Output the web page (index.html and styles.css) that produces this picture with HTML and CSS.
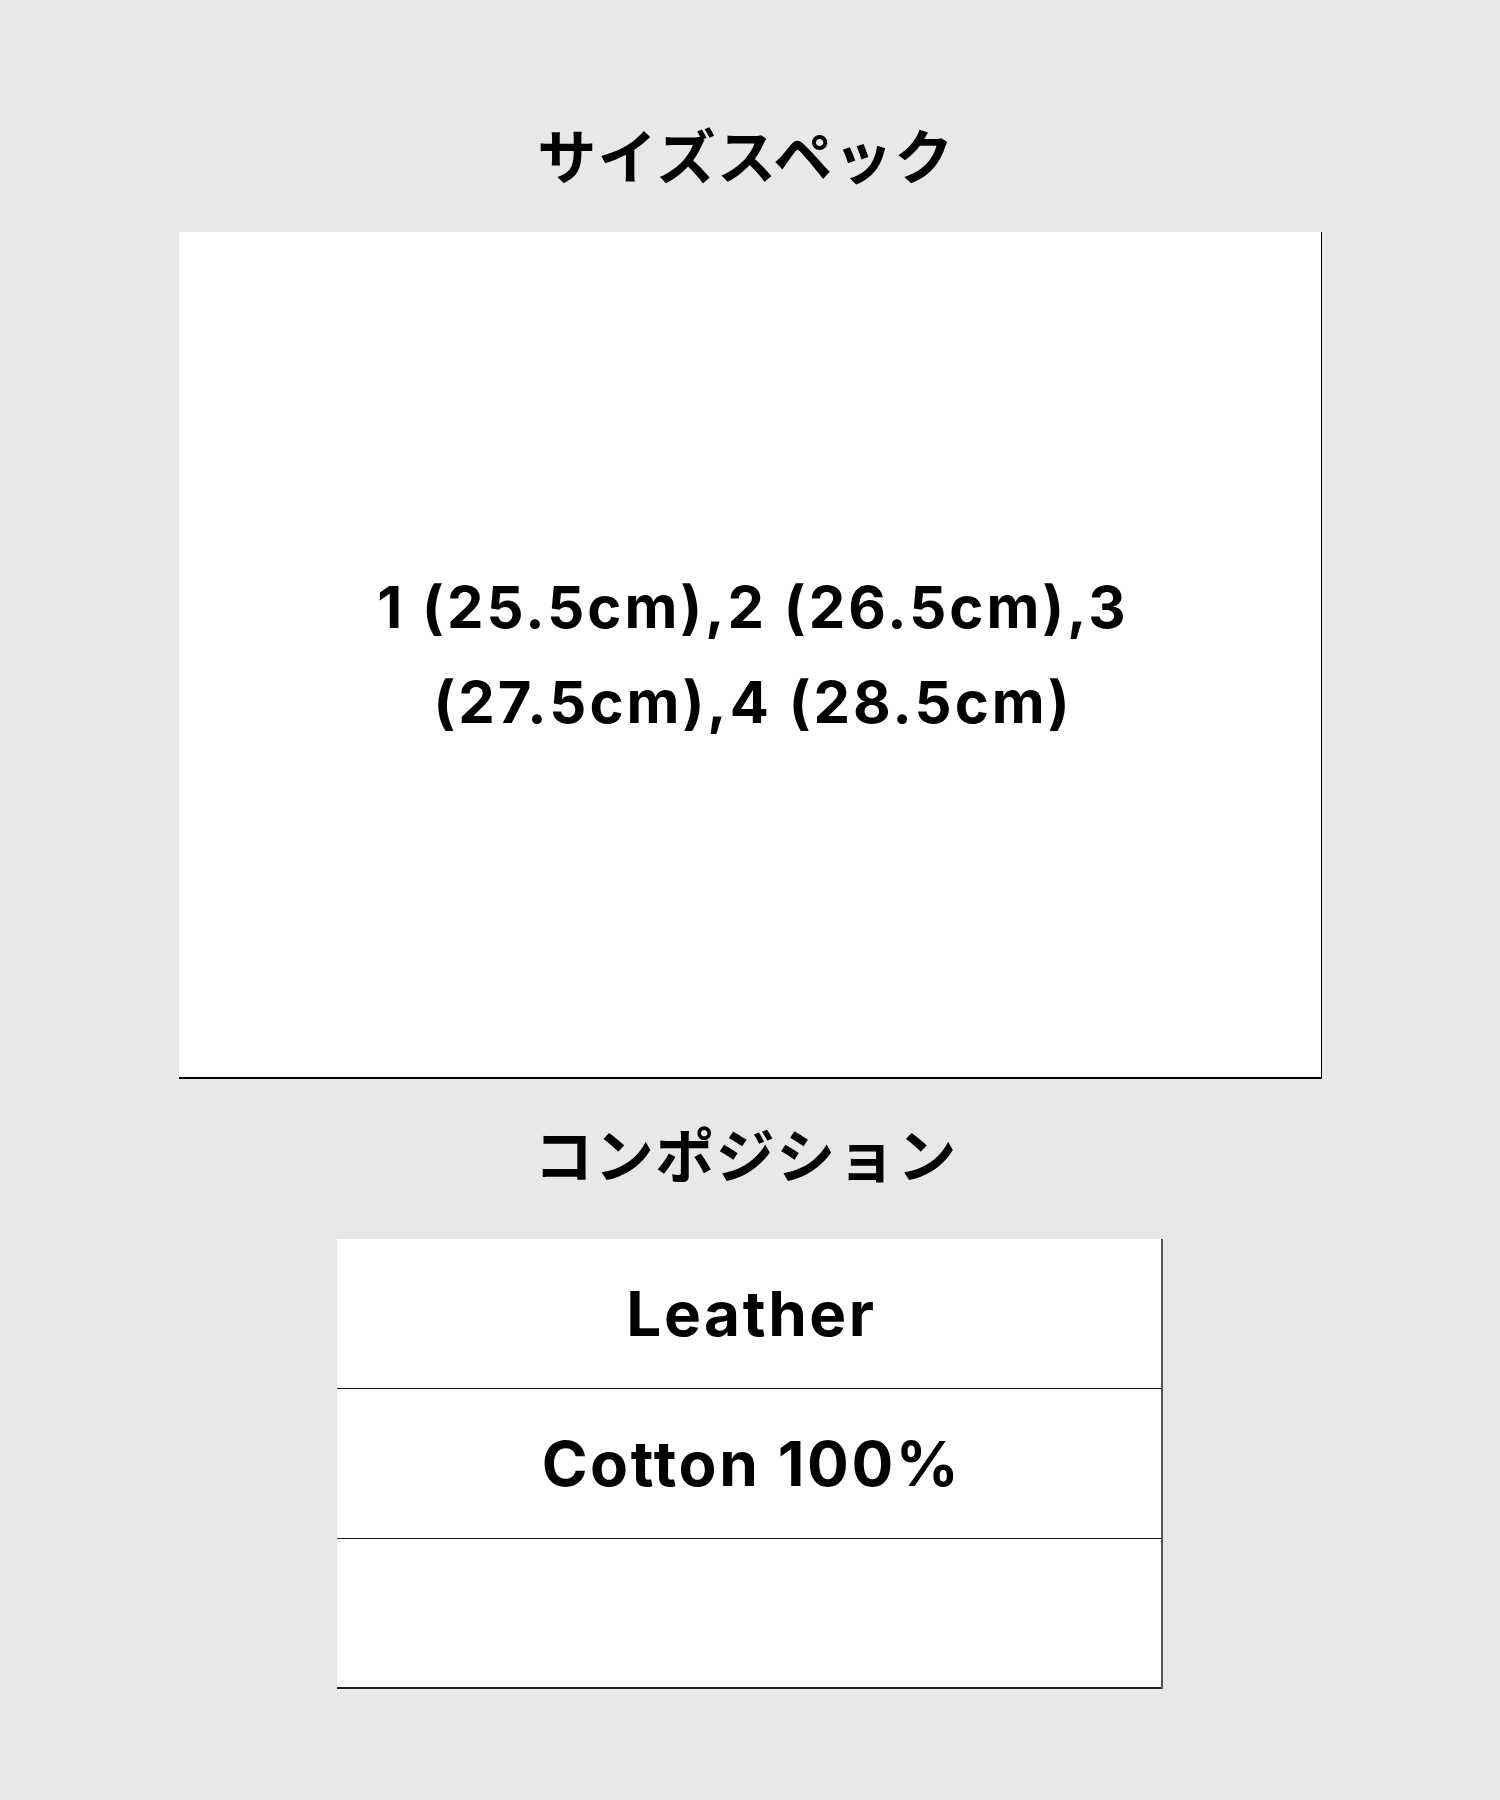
FILE: index.html
```html
<!DOCTYPE html>
<html lang="ja">
<head>
<meta charset="utf-8">
<title>サイズスペック</title>
<link rel="stylesheet" href="styles.css">
</head>
<body>
<main class="page">
  <h2 class="title title-size">サイズスペック</h2>
  <section class="size-box">
    <p class="size-text">1 (25.5cm),2 (26.5cm),3 (27.5cm),4 (28.5cm)</p>
  </section>
  <h2 class="title title-comp">コンポジション</h2>
  <section class="comp-table">
    <div class="comp-row">Leather</div>
    <div class="comp-row">Cotton 100%</div>
    <div class="comp-row"></div>
  </section>
</main>
</body>
</html>
```
FILE: styles.css
```css
html, body {
  margin: 0;
  padding: 0;
  background: #e8e8e8;
}
.page {
  display: flex;
  flex-direction: column;
  align-items: center;
  padding-top: 114px;
  min-height: 1800px;
  box-sizing: border-box;
}
.title {
  margin: 0;
  font-family: "Noto Sans CJK JP", sans-serif;
  font-weight: 700;
  font-size: 59px;
  line-height: 80px;
  letter-spacing: 1.5px;
  padding-right: 8px;
  color: #000;
}
.title-size {
  margin-bottom: 38px;
}
.title-comp {
  margin-top: 34px;
  margin-bottom: 46px;
}
.size-box {
  width: 1143px;
  height: 847px;
  box-sizing: border-box;
  background: #fff;
  border-right: 1px solid #000;
  border-bottom: 2px solid #000;
  display: flex;
  align-items: center;
  justify-content: center;
  margin-left: 1px;
}
.size-text {
  margin: 0;
  max-width: 900px;
  text-align: center;
  font-family: Inter, "Liberation Sans", sans-serif;
  font-weight: 700;
  font-size: 58px;
  line-height: 95px;
  letter-spacing: 3px;
  padding-left: 6px;
  color: #000;
}
.comp-table {
  width: 824px;
  background: #fff;
  border-right: 2px solid #555;
  display: flex;
  flex-direction: column;
}
.comp-row {
  height: 150px;
  box-sizing: border-box;
  border-bottom: 1px solid #1a1a1a;
  display: flex;
  align-items: center;
  justify-content: center;
  font-family: Inter, "Liberation Sans", sans-serif;
  font-weight: 700;
  font-size: 62px;
  letter-spacing: 2.6px;
  padding-left: 5px;
  color: #000;
}
.comp-row:last-child {
  border-bottom: 2px solid #222;
}
```
